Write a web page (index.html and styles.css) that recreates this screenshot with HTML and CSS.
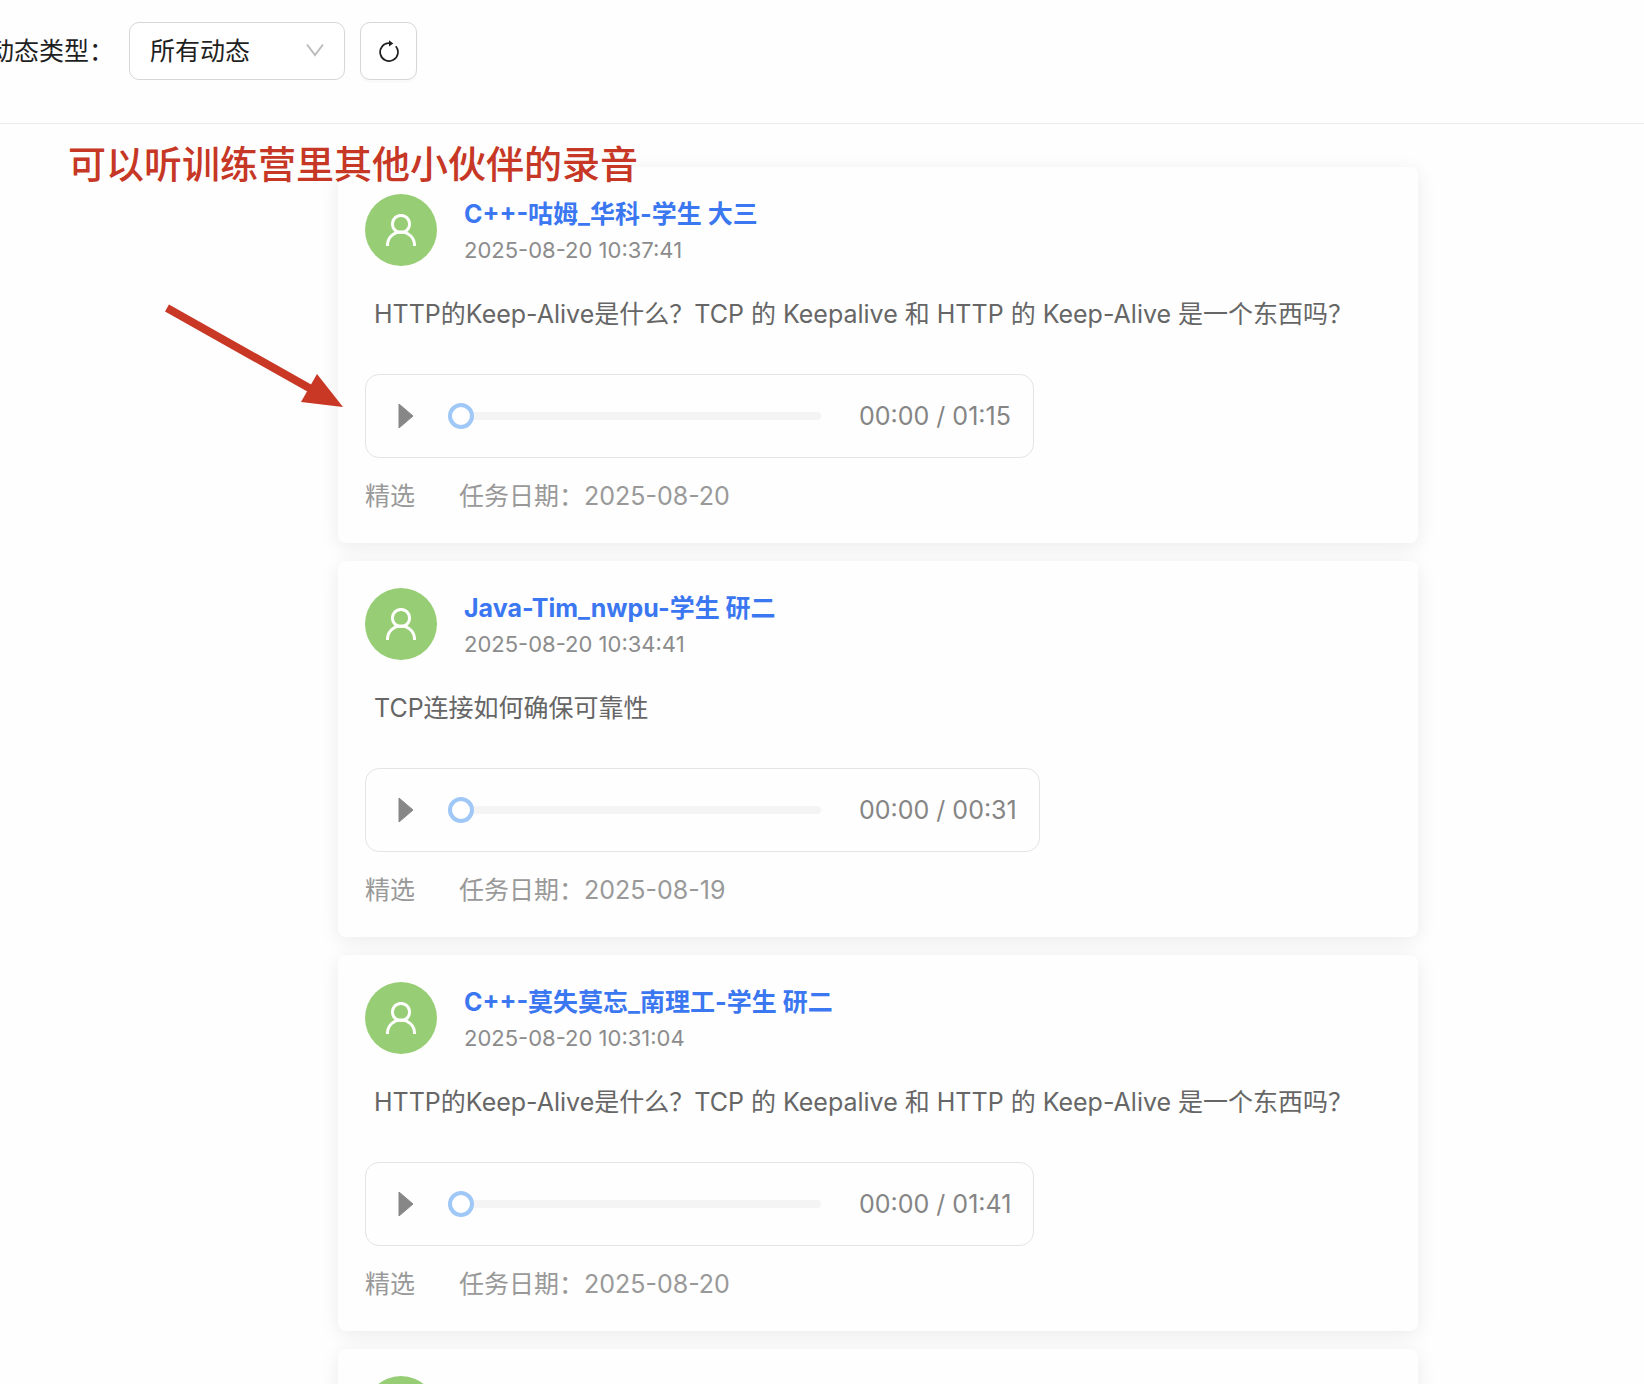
FILE: index.html
```html
<!DOCTYPE html>
<html lang="zh-CN">
<head>
<meta charset="utf-8">
<title>动态</title>
<link rel="stylesheet" href="styles.css">
</head>
<body>
<svg class="defs" aria-hidden="true">
  <symbol id="user" viewBox="0 0 30 32">
    <circle cx="15" cy="10" r="8.6"/>
    <path d="M1.500 32v-.8a13.500 13.300 0 0 1 27 0V32"/>
  </symbol>
  <symbol id="play" viewBox="0 0 16 26">
    <path d="M1 1 15 13 1 25Z"/>
  </symbol>
</svg>
<div class="page">
  <header class="toolbar">
    <label class="toolbar-label" for="type">动态类型：</label>
    <div class="select-box">
      <select id="type" class="select"><option>所有动态</option></select>
      <svg class="chevron" viewBox="0 0 18 14" aria-hidden="true"><path d="M1 1.500 9 12 17 1.500"/></svg>
    </div>
    <button class="refresh" type="button" aria-label="刷新">
      <svg class="refresh-icon" viewBox="0 0 20 22" aria-hidden="true">
        <path class="ring" d="M11 3.200H10A8.900 8.900 0 1 0 16.800 6.300"/>
        <path class="head" d="M10 .3 14.300 3.600 10 6.600Z"/>
      </svg>
    </button>
  </header>
  <main class="feed">
    <p class="note">可以听训练营里其他小伙伴的录音</p>
    <svg class="arrow" viewBox="0 0 180 106" aria-hidden="true">
      <path class="shaft" d="M3 5 147 86"/>
      <path class="tip" d="M153 71 179 104 137 99Z"/>
    </svg>

    <article class="card">
      <div class="author">
        <span class="avatar"><svg class="user"><use href="#user"/></svg></span>
        <div class="who"><a class="name" href="#">C++-咕姆_华科-学生 大三</a><time class="time">2025-08-20 10:37:41</time></div>
      </div>
      <p class="question">HTTP的Keep-Alive是什么？TCP 的 Keepalive 和 HTTP 的 Keep-Alive 是一个东西吗？</p>
      <div class="player">
        <button class="play" type="button" aria-label="播放"><svg class="play-icon"><use href="#play"/></svg></button>
        <input class="seek" type="range" min="0" max="75" value="0" aria-label="播放进度">
        <span class="clock">00:00 / 01:15</span>
      </div>
      <footer class="meta"><span>精选</span><span>任务日期：2025-08-20</span></footer>
    </article>

    <article class="card">
      <div class="author">
        <span class="avatar"><svg class="user"><use href="#user"/></svg></span>
        <div class="who"><a class="name" href="#">Java-Tim_nwpu-学生 研二</a><time class="time">2025-08-20 10:34:41</time></div>
      </div>
      <p class="question">TCP连接如何确保可靠性</p>
      <div class="player">
        <button class="play" type="button" aria-label="播放"><svg class="play-icon"><use href="#play"/></svg></button>
        <input class="seek" type="range" min="0" max="31" value="0" aria-label="播放进度">
        <span class="clock">00:00 / 00:31</span>
      </div>
      <footer class="meta"><span>精选</span><span>任务日期：2025-08-19</span></footer>
    </article>

    <article class="card">
      <div class="author">
        <span class="avatar"><svg class="user"><use href="#user"/></svg></span>
        <div class="who"><a class="name" href="#">C++-莫失莫忘_南理工-学生 研二</a><time class="time">2025-08-20 10:31:04</time></div>
      </div>
      <p class="question">HTTP的Keep-Alive是什么？TCP 的 Keepalive 和 HTTP 的 Keep-Alive 是一个东西吗？</p>
      <div class="player">
        <button class="play" type="button" aria-label="播放"><svg class="play-icon"><use href="#play"/></svg></button>
        <input class="seek" type="range" min="0" max="101" value="0" aria-label="播放进度">
        <span class="clock">00:00 / 01:41</span>
      </div>
      <footer class="meta"><span>精选</span><span>任务日期：2025-08-20</span></footer>
    </article>

    <article class="card">
      <div class="author">
        <span class="avatar"></span>
      </div>
    </article>
  </main>
</div>
</body>
</html>
```
FILE: styles.css
```css
* { box-sizing: border-box; }

body {
  margin: 0;
  background: #fefefe;
  color: #1f1f1f;
  font: 25px/40px Inter, "Noto Sans CJK SC", sans-serif;
}

p { margin: 0; }
.defs { display: none; }

.page {
  display: flex;
  flex-direction: column;
  height: 100vh;
  overflow: hidden;
}

/* Filter bar */
.toolbar {
  display: flex;
  flex: none;
  align-items: center;
  padding: 22px 0 43px;
  border-bottom: 1px solid #ebebeb;
}
.toolbar-label { margin: 0 15px 0 -11px; white-space: nowrap; }
.select-box { position: relative; width: 216px; margin-right: 15px; }
.select {
  display: block;
  width: 100%;
  height: 58px;
  padding: 0 48px 0 20px;
  appearance: none;
  border: 1px solid #d6d6d6;
  border-radius: 10px;
  background: #fff;
  color: inherit;
  font: inherit;
}
.chevron {
  position: absolute;
  top: 21px;
  right: 21px;
  width: 18px;
  height: 14px;
  fill: none;
  stroke: #bdbdbd;
  stroke-width: 2;
  pointer-events: none;
}
.refresh {
  display: grid;
  place-items: center;
  width: 57px;
  height: 58px;
  padding: 0;
  border: 1px solid #d6d6d6;
  border-radius: 10px;
  background: #fff;
  box-shadow: 0 3px 0 rgba(0, 0, 0, .02);
}
.refresh-icon { width: 20px; height: 22px; }
.ring { fill: none; stroke: #1f1f1f; stroke-width: 1.700; }
.head { fill: #1f1f1f; }

/* Feed */
.feed {
  position: relative;
  display: flex;
  flex: none;
  flex-direction: column;
  align-items: center;
  gap: 18px;
  padding: 43px 0 43px 112px;
}
.note {
  position: absolute;
  top: 12px;
  left: 68px;
  z-index: 1;
  color: #c63725;
  font-size: 38px;
  font-weight: 500;
  line-height: 56px;
  white-space: nowrap;
}
.arrow {
  position: absolute;
  top: 179px;
  left: 164px;
  z-index: 1;
  width: 180px;
  height: 106px;
}
.shaft { fill: none; stroke: #c93725; stroke-width: 8; }
.tip { fill: #c93725; }

.card {
  width: 100%;
  max-width: 1080px;
  padding: 27px;
  border-radius: 8px;
  background: #fefefe;
  box-shadow: 0 4px 20px rgba(0, 0, 0, .08);
}
.author { display: flex; gap: 27px; }
.avatar {
  display: grid;
  flex: none;
  place-items: center;
  width: 72px;
  height: 72px;
  border-radius: 50%;
  background: #97ce75;
}
.user {
  width: 30px;
  height: 32px;
  fill: none;
  stroke: #fff;
  stroke-width: 3;
}
.who { display: flex; flex-direction: column; }
.name { color: #3b77f0; font-weight: 700; text-decoration: none; }
.time { color: #8c8c8c; font-size: 22px; line-height: 32px; }
.question { margin: 28px 0 40px; padding-left: 9px; color: #666; }

.player {
  display: flex;
  align-items: center;
  width: fit-content;
  height: 84px;
  padding: 0 22px 0 32px;
  border: 1px solid #e4e4e4;
  border-radius: 14px;
}
.play {
  display: flex;
  padding: 0;
  border: 0;
  background: none;
}
.play-icon {
  width: 16px;
  height: 26px;
  fill: #878787;
  stroke: #878787;
  stroke-linejoin: round;
}
.seek {
  width: 373px;
  height: 26px;
  margin: 0 38px 0 34px;
  appearance: none;
  background: none;
}
.seek::-webkit-slider-runnable-track {
  height: 8px;
  border-radius: 4px;
  background: #f4f4f5;
}
.seek::-webkit-slider-thumb {
  width: 26px;
  height: 26px;
  margin-top: -9px;
  appearance: none;
  border: 4px solid #9fc8f7;
  border-radius: 50%;
  background: #fff;
}
.clock { color: #858585; white-space: nowrap; }
.meta { display: flex; gap: 44px; margin-top: 18px; color: #999; }
```
